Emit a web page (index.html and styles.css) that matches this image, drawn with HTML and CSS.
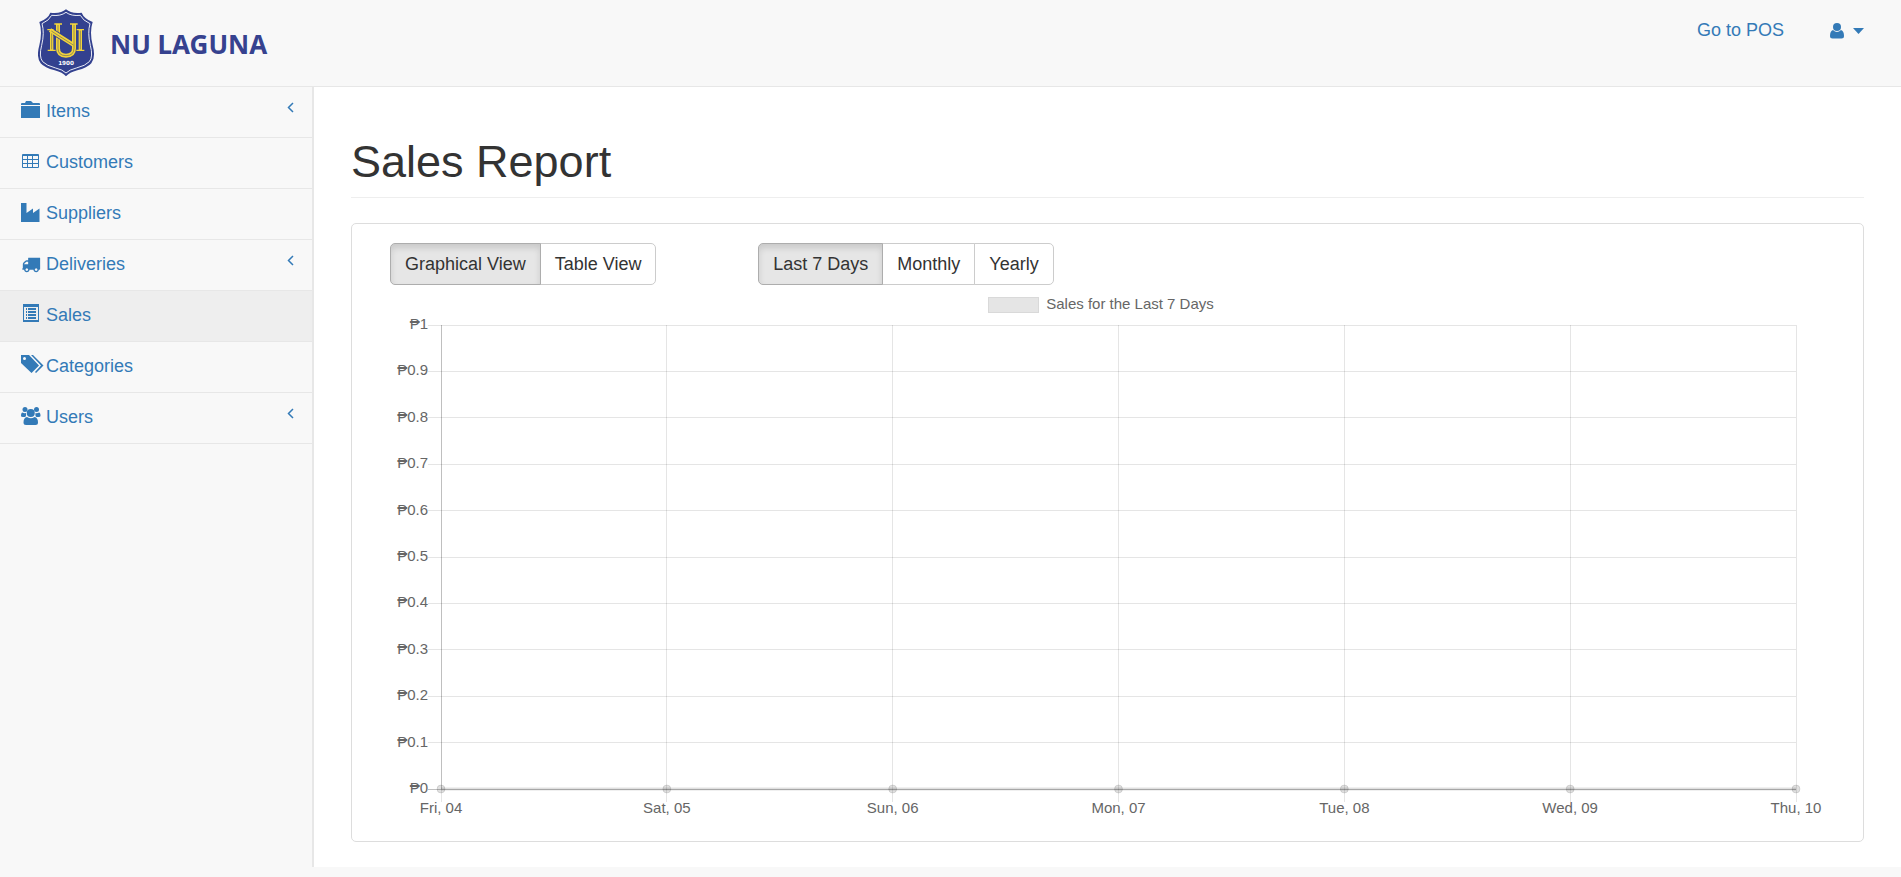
FILE: index.html
```html
<!DOCTYPE html>
<html lang="en">
<head>
<meta charset="utf-8">
<title>Sales Report</title>
<link rel="stylesheet" href="styles.css">
</head>
<body>
<header class="topbar">
  <a class="brand" href="#">
    <svg class="brand-logo" viewBox="24 27 171 204" aria-hidden="true">
      <path fill="#33418f" d="M108 28Q92 42 61 38Q54 56 28 66Q38 96 28 136Q18 172 32 190Q44 204 74 211Q98 217 108 229Q118 217 142 211Q172 204 184 190Q198 172 188 136Q178 96 188 66Q162 56 155 38Q124 42 108 28Z"/>
      <path fill="none" stroke="#e9ebf5" stroke-width="3" d="M108 37Q92 49 65 46Q58 61 36 71Q44 98 35 136Q26 170 38 185Q49 197 77 204Q98 209 108 219Q118 209 139 204Q167 197 178 185Q190 170 181 136Q172 98 180 71Q158 61 151 46Q124 49 108 37Z"/>
      <g fill="none" stroke="#f2d43c">
        <path stroke-width="10" d="M65 88V151M151 88V151"/>
        <path stroke-width="4" d="M52 89H70M53 151H77M140 89H162M139 151H163"/>
        <path stroke-width="12" d="M84 72V145Q84 167 108 167Q132 167 132 145V72"/>
        <path stroke-width="4" d="M73 72H96M120 72H143"/>
      </g>
      <path fill="none" stroke="#33418f" stroke-width="17" d="M74 99L120 128"/>
      <path fill="none" stroke="#f2d43c" stroke-width="12" d="M60 90L134 137"/>
      <path fill="none" stroke="#6b6a5c" stroke-width="2" d="M65 100V148M151 92V148M84 75V96M84 118V145Q84 167 108 167Q132 167 132 145V75M64 93L130 135"/>
      <text class="brand-year" x="108" y="195" text-anchor="middle">1900</text>
    </svg>
    <span class="brand-name">NU LAGUNA</span>
  </a>
  <nav class="topnav">
    <a href="#">Go to POS</a>
    <a class="user-menu" href="#" aria-label="Account">
      <svg width="14" height="16" viewBox="0 0 14 16"><circle cx="7" cy="4" r="4"/><path d="M3 7Q0 8 0 13Q0 15.500 2.500 15.500H11.500Q14 15.500 14 13Q14 8 11 7Q9 9 7 9T3 7Z"/></svg>
      <svg width="11" height="6" viewBox="0 0 11 6"><path d="M0 0H11L5.500 6Z"/></svg>
    </a>
  </nav>
</header>
<div class="layout">
  <nav class="sidebar">
    <a href="#">
      <svg class="icon" viewBox="0 0 24 20"><path d="M0 6H19V18H0ZM0 5V4Q0 3 1 3H4L5 1H10L12 3H18Q19 3 19 4V5Z"/></svg>
      <span>Items</span>
      <svg class="chevron" viewBox="0 0 7 11"><path d="M6 1L1.500 5.500L6 10"/></svg>
    </a>
    <a href="#">
      <svg class="icon" viewBox="0 0 24 20"><path fill-rule="evenodd" d="M2 3H17Q18 3 18 4V16Q18 17 17 17H2Q1 17 1 16V4Q1 3 2 3ZM2 5V8H6V5ZM7 5V8H11V5ZM12 5V8H17V5ZM2 9V12H6V9ZM7 9V12H11V9ZM12 9V12H17V9ZM2 13V16H6V13ZM7 13V16H11V13ZM12 13V16H17V13Z"/></svg>
      <span>Customers</span>
    </a>
    <a href="#">
      <svg class="icon" viewBox="0 0 24 20"><path d="M0 1H5.500V11L12 6.500V11L18.500 6.500V20H0Z"/></svg>
      <span>Suppliers</span>
    </a>
    <a href="#">
      <svg class="icon" viewBox="0 0 24 20"><path transform="translate(0.500 2) scale(0.0104)" d="M640 1408q0-52-38-90t-90-38-90 38-38 90 38 90 90 38 90-38 38-90zm-384-512h384v-256h-158q-13 0-22 9l-195 195q-9 9-9 22v30zm1280 512q0-52-38-90t-90-38-90 38-38 90 38 90 90 38 90-38 38-90zm256-1088v1024q0 15-4 26.500t-13.500 18.500-16.500 11.500-23.500 6-22.500 2-25.500 0-22.500-.5q0 106-75 181t-181 75-181-75-75-181h-384q0 106-75 181t-181 75-181-75-75-181h-64q-3 0-22.500.5t-25.500 0-22.500-2-23.500-6-16.500-11.500-13.500-18.500-4-26.500q0-26 19-45t45-19v-320q0-8-.5-35t0-38 2.500-34.500 6.500-37 14-30.500 22.500-30l198-198q19-19 50.500-32t58.500-13h160v-192q0-26 19-45t45-19h1024q26 0 45 19t19 45z"/></svg>
      <span>Deliveries</span>
      <svg class="chevron" viewBox="0 0 7 11"><path d="M6 1L1.500 5.500L6 10"/></svg>
    </a>
    <a class="active" href="#">
      <svg class="icon" viewBox="0 0 24 20"><path fill-rule="evenodd" d="M2 0H18V18H2ZM3 3V16H17V3ZM5 4H6V6H5ZM7 4H15V6H7ZM5 7H6V9H5ZM7 7H15V9H7ZM5 10H6V12H5ZM7 10H15V12H7ZM5 13H6V15H5ZM7 13H15V15H7Z"/></svg>
      <span>Sales</span>
    </a>
    <a href="#">
      <svg class="icon" viewBox="0 0 24 20"><path fill-rule="evenodd" d="M0 0H8L18 10.500L10.500 18L0 8ZM3.500 2A1.500 1.500 0 1 0 3.500 5A1.500 1.500 0 1 0 3.500 2Z"/><path d="M10 0H12L22.500 10.500L15 18L14 17L20 10.500Z"/></svg>
      <span>Categories</span>
    </a>
    <a href="#">
      <svg class="icon" viewBox="0 0 24 20"><circle cx="4" cy="3.500" r="2.500"/><circle cx="15.500" cy="3.500" r="2.500"/><path d="M1.500 6.500Q0 6.500 0 10Q0 11 2 11H4Q5.500 10.500 5 7Q3 7.500 1.500 6.500ZM18 6.500Q19.500 6.500 19.500 10Q19.500 11 17.500 11H15.500Q14 10.500 14.500 7Q16.500 7.500 18 6.500Z"/><circle cx="9.750" cy="7" r="4"/><path d="M6 11Q2.500 11.500 2.500 16.500Q2.500 19 5 19H14.500Q17 19 17 16.500Q17 11.500 13.500 11Q10 13.500 6 11Z"/></svg>
      <span>Users</span>
      <svg class="chevron" viewBox="0 0 7 11"><path d="M6 1L1.500 5.500L6 10"/></svg>
    </a>
  </nav>
  <main class="page">
    <h1>Sales Report</h1>
    <section class="panel">
      <div class="controls">
        <div class="btn-group">
          <button class="active" type="button">Graphical View</button><button type="button">Table View</button>
        </div>
        <div class="btn-group">
          <button class="active" type="button">Last 7 Days</button><button type="button">Monthly</button><button type="button">Yearly</button>
        </div>
      </div>
      <div class="legend"><span class="swatch"></span>Sales for the Last 7 Days</div>
      <div class="chart">
        <svg class="plot" role="img" aria-label="Sales for the Last 7 Days" id="plot"></svg>
      </div>
    </section>
  </main>
</div>
<script src="chart.js"></script>
</body>
</html>
```

FILE: chart.js
```js
const days = ["Fri, 04", "Sat, 05", "Sun, 06", "Mon, 07", "Tue, 08", "Wed, 09", "Thu, 10"];
const ticks = ["1", "0.9", "0.8", "0.7", "0.6", "0.5", "0.4", "0.3", "0.2", "0.1", "0"];
const plot = document.getElementById("plot");

function add(tag, attrs, text) {
  const el = document.createElementNS("http://www.w3.org/2000/svg", tag);
  for (const key in attrs) el.setAttribute(key, attrs[key]);
  if (text) el.textContent = text;
  plot.appendChild(el);
}

ticks.forEach((label, i) => {
  const y = i * 10 + "%";
  const cls = label === "0" ? "grid axis" : "grid";
  add("line", { class: cls, x1: -13, x2: "100%", y1: y, y2: y });
  add("text", { x: -13, y: y, dy: 4, "text-anchor": "end" }, "₱" + label);
});

days.forEach((label, i) => {
  const x = (i * 100) / (days.length - 1) + "%";
  add("line", { class: i === 0 ? "grid axis" : "grid", x1: x, x2: x, y1: 0, y2: "100%" });
  add("svg", { x: x, y: "100%", overflow: "visible" });
  const mark = plot.lastChild;
  mark.innerHTML = '<line class="grid" x1="0" x2="0" y1="0" y2="13"/><circle class="point" r="4"/>' +
    '<text y="24" text-anchor="middle">' + label + "</text>";
});

add("line", { class: "series", x1: 0, x2: "100%", y1: "100%", y2: "100%" });
```

FILE: styles.css
```css
* { box-sizing: border-box; }

body {
  margin: 0;
  min-height: 100vh;
  background: #f8f8f8;
  color: #333;
  font: 18px/25px "Liberation Sans", Arial, sans-serif;
}

a { color: #337ab7; text-decoration: none; }
svg { fill: #337ab7; }

.topbar {
  display: flex;
  justify-content: space-between;
  align-items: flex-start;
  height: 87px;
  padding: 9px 37px 0 38px;
  border-bottom: 1px solid #e7e7e7;
}

.brand { display: flex; align-items: center; gap: 15px; }
.brand-logo { width: 57px; height: 68px; }
.brand-year { font: bold 17px "DejaVu Sans", sans-serif; fill: #fff; }
.brand-name { padding-top: 2px; color: #36428f; font: bold 26px/36px "Noto Sans", sans-serif; }

.topnav { display: flex; gap: 46px; padding-top: 9px; }
.user-menu { display: flex; align-items: center; gap: 9px; }

.layout { display: flex; align-items: flex-start; }

.sidebar { flex: 0 0 312px; }
.sidebar a {
  display: flex;
  gap: 1px;
  padding: 12px 18px 13px 21px;
  border-bottom: 1px solid #e7e7e7;
}
.sidebar a.active { background: #eee; }
.icon { width: 24px; height: 20px; margin-top: 1px; }
.chevron {
  width: 7px;
  height: 11px;
  margin: 3px 0 0 auto;
  fill: none;
  stroke: #337ab7;
  stroke-width: 1.5;
}

.page {
  flex: 1;
  padding: 50px 37px 25px;
  background: #fff;
  border-left: 2px solid #e7e7e7;
}

h1 {
  margin: 0 0 25px;
  padding-bottom: 10px;
  border-bottom: 1px solid #eee;
  font-size: 45px;
  line-height: 50px;
  font-weight: 400;
}

.panel {
  padding: 19px 0 52px;
  border: 1px solid #ddd;
  border-radius: 5px;
}

.controls { display: grid; grid-template-columns: 1fr 3fr; padding-left: 38px; }
.btn-group { display: flex; }
.btn-group button {
  padding: 8px 14px;
  margin: 0;
  border: 1px solid #ccc;
  background: #fff;
  color: #333;
  font: inherit;
  line-height: 24px;
}
.btn-group button + button { margin-left: -1px; }
.btn-group button:first-child { border-radius: 5px 0 0 5px; }
.btn-group button:last-child { border-radius: 0 5px 5px 0; }
.btn-group button.active {
  position: relative;
  background: #e6e6e6;
  border-color: #adadad;
  box-shadow: inset 0 4px 6px rgba(0, 0, 0, 0.125);
}

.legend {
  display: flex;
  justify-content: center;
  align-items: center;
  gap: 7px;
  padding: 9px 13px 11px 0;
  color: #666;
  font-size: 15px;
  line-height: 20px;
}
.swatch {
  width: 51px;
  height: 16px;
  margin-top: 2px;
  background: #e5e5e5;
  border: 1px solid #d9d9d9;
}

.chart { padding: 0 67px 0 89px; }
.plot { display: block; width: 100%; height: 464px; overflow: visible; }
.plot text { fill: #666; font-size: 15px; }
.grid { stroke: rgba(0, 0, 0, 0.1); stroke-width: 1; shape-rendering: crispEdges; }
.axis { stroke: rgba(0, 0, 0, 0.25); }
.series { stroke: rgba(0, 0, 0, 0.12); stroke-width: 3; }
.point { fill: rgba(0, 0, 0, 0.12); stroke: rgba(0, 0, 0, 0.1); }
```
